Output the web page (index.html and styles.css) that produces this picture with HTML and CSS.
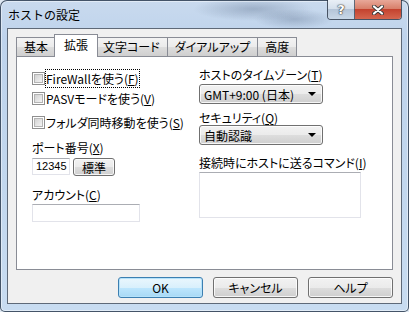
FILE: index.html
```html
<!DOCTYPE html>
<html lang="ja">
<head>
    <meta charset="UTF-8">
    <title>ホストの設定</title>
    <link rel="stylesheet" href="styles.css">
</head>
<body>
    <div class="window">
        <div class="titlebar">
            <span class="title">ホストの設定</span>
            <div class="caption-buttons">
                <span class="cap help">?</span>
                <span class="cap close">
                    <svg width="12" height="10" viewBox="0 0 12 10">
                        <path d="M2 1.5 L10 8.5 M10 1.5 L2 8.5" stroke="#3b3b3b" stroke-width="4" stroke-linecap="round"/>
                        <path d="M2 1.5 L10 8.5 M10 1.5 L2 8.5" stroke="#fff" stroke-width="2.2" stroke-linecap="round"/>
                    </svg>
                </span>
            </div>
        </div>

        <div class="client">
            <div class="tabs">
                <div class="tab">基本</div>
                <div class="tab active">拡張</div>
                <div class="tab">文字コード</div>
                <div class="tab">ダイアルアップ</div>
                <div class="tab">高度</div>
            </div>

            <div class="pane">
                <div class="col left-col">
                    <div class="check-row first">
                        <span class="checkbox"></span>
                        <span class="focused">FireWallを使う(<u>F</u>)</span>
                    </div>
                    <div class="check-row second">
                        <span class="checkbox"></span>
                        <span>PASVモードを使う(<u>V</u>)</span>
                    </div>
                    <div class="check-row third">
                        <span class="checkbox"></span>
                        <span>フォルダ同時移動を使う(<u>S</u>)</span>
                    </div>

                    <div class="label port-label">ポート番号(<u>X</u>)</div>
                    <div class="port-row">
                        <div class="textbox port">12345</div>
                        <div class="button small">標準</div>
                    </div>

                    <div class="label account-label">アカウント(<u>C</u>)</div>
                    <div class="textbox account"></div>
                </div>

                <div class="col right-col">
                    <div class="label">ホストのタイムゾーン(<u>T</u>)</div>
                    <div class="combo">
                        <span>GMT+9:00 (日本)</span>
                        <span class="arrow"></span>
                    </div>

                    <div class="label security-label">セキュリティ(<u>Q</u>)</div>
                    <div class="combo">
                        <span>自動認識</span>
                        <span class="arrow"></span>
                    </div>

                    <div class="label command-label">接続時にホストに送るコマンド(<u>I</u>)</div>
                    <div class="textbox command"></div>
                </div>
            </div>

            <div class="buttons">
                <div class="button default">OK</div>
                <div class="button">キャンセル</div>
                <div class="button">ヘルプ</div>
            </div>
        </div>
    </div>
</body>
</html>
```

FILE: styles.css
```css
body {
    margin: 0;
    background-color: #dfe8f2;
    font-family: "Noto Sans CJK JP", sans-serif;
    font-size: 12px;
    color: #000;
}

/* Window frame (Aero glass) */
.window {
    width: 409px;
    height: 312px;
    box-sizing: border-box;
    border: 1px solid rgba(35, 50, 70, 0.8);
    border-radius: 7px 7px 5px 5px;
    padding: 0 6px 7px 6px;
    display: flex;
    flex-direction: column;
    background:
        radial-gradient(ellipse 60px 12px at 62% 8px, rgba(80, 100, 130, 0.35), transparent),
        radial-gradient(ellipse 40px 10px at 72% 18px, rgba(70, 90, 120, 0.3), transparent),
        linear-gradient(to bottom, #c9daee, #bed3ec 12%, #c2d7ee 60%, #c8dcf1);
    box-shadow: inset 0 0 0 1px rgba(255, 255, 255, 0.45);
}

.titlebar {
    height: 27px;
    display: flex;
    align-items: flex-start;
}

.title {
    padding: 6px 0 0 1px;
    line-height: 16px;
    font-size: 12px;
    color: #000;
}

.caption-buttons {
    margin-left: auto;
    margin-top: -1px;
    display: flex;
    height: 19px;
    border: 1px solid rgba(40, 50, 65, 0.8);
    border-top: none;
    border-radius: 0 0 4px 4px;
    overflow: hidden;
}

.cap {
    display: flex;
    align-items: center;
    justify-content: center;
}

.cap.help {
    width: 26px;
    border-right: 1px solid rgba(40, 50, 65, 0.7);
    background: linear-gradient(to bottom, #e9eff6, #d5e0ec 45%, #b5c5d8 50%, #c9d8e8);
    color: #fff;
    font-family: "DejaVu Sans", sans-serif;
    font-weight: bold;
    font-size: 13px;
    text-shadow: 0 0 1px #333, 0 0 1px #333, 0 0 2px #555;
}

.cap.close {
    width: 46px;
    background: linear-gradient(to bottom, #e8a899, #d8806b 45%, #c4432f 50%, #d5664f);
}

/* Client area */
.client {
    flex: 1;
    border: 1px solid rgba(45, 60, 80, 0.75);
    background-color: #f0f0f0;
    display: flex;
    flex-direction: column;
}

.tabs {
    height: 27px;
    padding-left: 8px;
    display: flex;
    align-items: flex-end;
    font-feature-settings: "palt";
}

.tab {
    height: 18px;
    line-height: 18px;
    padding: 0 7px;
    border: 1px solid #898c95;
    border-bottom: none;
    margin-left: -1px;
    background: linear-gradient(to bottom, #f3f3f3, #ebebeb 50%, #dddddd 51%, #cfcfcf);
}

.tab:first-child {
    margin-left: 0;
}

.tab.active {
    height: 22px;
    line-height: 20px;
    padding: 0 9px;
    margin: 0 -2px -1px -2px;
    background: #fff;
    position: relative;
    z-index: 1;
}

.pane {
    height: 214px;
    box-sizing: border-box;
    margin: 0 8px 0 8px;
    border: 1px solid #898c95;
    background-color: #fff;
    display: flex;
    font-feature-settings: "palt";
}

.col {
    display: flex;
    flex-direction: column;
    align-items: flex-start;
}

.left-col {
    width: 167px;
    margin-left: 15px;
    padding-top: 13px;
}

.right-col {
    padding-top: 11px;
}

.check-row {
    height: 17px;
    display: flex;
    align-items: center;
    gap: 1px;
}

.check-row.second {
    margin-top: 3px;
}

.check-row.third {
    margin-top: 7px;
}

.checkbox {
    width: 13px;
    height: 13px;
    box-sizing: border-box;
    border: 1px solid #8f8f8f;
    background-color: #fff;
    padding: 1px;
    display: flex;
}

.checkbox::before {
    content: "";
    flex: 1;
    border: 1px solid #b4b4b4;
    background: linear-gradient(135deg, #d3d3d3, #f3f3f3);
}

.focused {
    outline: 1px dotted #000;
}

.label {
    line-height: 14px;
    white-space: nowrap;
}

.port-label {
    margin-top: 10px;
}

.port-row {
    margin-top: 3px;
    display: flex;
    align-items: flex-start;
    gap: 3px;
}

.account-label {
    margin-top: 12px;
}

.textbox {
    box-sizing: border-box;
    border: 1px solid #e2e3ea;
    border-top-color: #abadb3;
    background-color: #fff;
}

.textbox.port {
    width: 38px;
    height: 17px;
    line-height: 15px;
    padding-left: 3px;
    font-family: "Liberation Sans", sans-serif;
    font-size: 11px;
}

.textbox.account {
    margin-top: 2px;
    width: 108px;
    height: 18px;
}

.button {
    box-sizing: border-box;
    border: 1px solid #707070;
    border-radius: 3px;
    background: linear-gradient(to bottom, #f2f2f2, #ebebeb 50%, #dddddd 51%, #cfcfcf);
    box-shadow: inset 0 0 0 1px rgba(255, 255, 255, 0.8);
    display: flex;
    align-items: center;
    justify-content: center;
}

.button.small {
    width: 42px;
    height: 18px;
}

.combo {
    margin-top: 2px;
    width: 124px;
    height: 20px;
    box-sizing: border-box;
    border: 1px solid #707070;
    border-radius: 3px;
    background: linear-gradient(to bottom, #f2f2f2, #ebebeb 50%, #dddddd 51%, #cfcfcf);
    box-shadow: inset 0 0 0 1px rgba(255, 255, 255, 0.8);
    display: flex;
    align-items: center;
    justify-content: space-between;
    padding: 0 6px 0 4px;
}

.arrow {
    width: 0;
    height: 0;
    border-left: 4px solid transparent;
    border-right: 4px solid transparent;
    border-top: 4px solid #000;
}

.security-label {
    margin-top: 7px;
}

.security-label + .combo {
    margin-top: 0;
}

.command-label {
    margin-top: 11px;
}

.textbox.command {
    margin-top: 2px;
    width: 162px;
    height: 46px;
}

/* Dialog buttons */
.buttons {
    margin-top: 7px;
    padding-right: 8px;
    display: flex;
    justify-content: flex-end;
    gap: 10px;
    font-feature-settings: "palt";
}

.buttons .button {
    width: 85px;
    height: 21px;
}

.button.default {
    border-color: #3c7fb1;
    background: linear-gradient(to bottom, #eaf6fd, #d9f0fc 50%, #bee6fd 51%, #a7d9f5);
    box-shadow: inset 0 0 0 1px #b5e2fa;
}
```
